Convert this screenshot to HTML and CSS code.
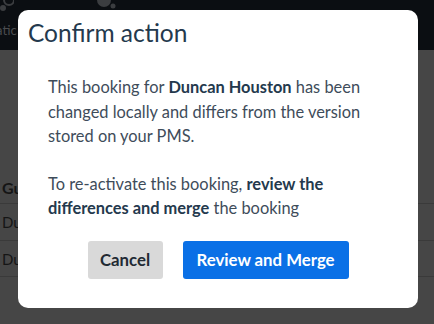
FILE: index.html
```html
<!DOCTYPE html>
<html>
<head>
<meta charset="utf-8">
<link rel="stylesheet" href="styles.css">
</head>
<body>
<div class="page">
  <header class="topbar">
    <div class="nav-item nav-first">
      <svg class="nav-icon" width="14" height="16" viewBox="0 0 14 16"><circle cx="9" cy="2" r="5" fill="none" stroke="#3b3d40" stroke-width="2"/><circle cx="3" cy="10" r="3" fill="#3b3d40"/></svg>
      <span class="nav-label">atic</span>
    </div>
    <div class="nav-item nav-second">
      <svg width="24" height="14" viewBox="0 0 24 14"><circle cx="8" cy="4" r="7" fill="#3b3d40"/><circle cx="17" cy="10" r="2.5" fill="#3b3d40"/></svg>
    </div>
  </header>
  <main class="table">
    <div class="row head-row">Gu</div>
    <div class="row">Du</div>
    <div class="row">Du</div>
  </main>
</div>

<div class="overlay">
  <div class="modal">
    <h2 class="modal-title">Confirm action</h2>
    <div class="modal-body">
      <p>This booking for <strong>Duncan Houston</strong> has been changed locally and differs from the version stored on your PMS.</p>
      <p>To re-activate this booking, <strong>review the differences and merge</strong> the booking</p>
    </div>
    <div class="modal-actions">
      <button class="btn btn-cancel">Cancel</button>
      <button class="btn btn-primary">Review and Merge</button>
    </div>
  </div>
</div>
</body>
</html>
```
FILE: styles.css
```css
* { box-sizing: border-box; }
html, body { margin: 0; padding: 0; }
body {
  width: 434px;
  height: 324px;
  overflow: hidden;
  background: #464646;
  font-family: Lato, "Noto Sans", sans-serif;
}
.topbar {
  height: 50px;
  background: #0b0e12;
  display: flex;
  align-items: flex-start;
}
.nav-item { display: flex; flex-direction: column; }
.nav-first { width: 100px; margin-left: -4px; }
.nav-icon { margin-left: 4px; margin-top: -2px; }
.nav-label {
  color: #4a4c4f;
  font-size: 13px;
  margin-top: 8px;
}
.nav-second { margin-top: -4px; }
.table { padding-top: 123px; }
.row {
  height: 37px;
  border-top: 1px solid #3a3a3a;
  color: #151515;
  font-size: 15px;
  line-height: 36px;
  padding-left: 2px;
}
.head-row {
  font-weight: 700;
  border-top: none;
  height: 30px;
  line-height: 30px;
  font-size: 16px;
}
.row:last-child { border-bottom: 1px solid #3a3a3a; }

.overlay {
  position: fixed;
  inset: 0;
  display: flex;
  justify-content: center;
  align-items: flex-start;
  padding: 10px 0 0 2px;
}
.modal {
  width: 400px;
  height: 298px;
  background: #fff;
  border-radius: 10px;
  display: flex;
  flex-direction: column;
}
.modal-title {
  margin: 0;
  padding: 7px 10px 0;
  font-size: 24.5px;
  line-height: 32px;
  font-weight: 400;
  color: #24394d;
}
.modal-body {
  padding: 26px 30px 0;
  color: #3e4c5a;
  font-size: 16.4px;
  line-height: 24.5px;
}
.modal-body p { margin: 0 0 23px; }
.modal-body p:last-child { margin: 0; }
.modal-body strong { color: #24394d; font-weight: 700; }
.modal-actions {
  display: flex;
  justify-content: center;
  gap: 20px;
  padding-top: 20px;
}
.btn {
  height: 38px;
  border: none;
  border-radius: 3px;
  font-family: Lato, "Noto Sans", sans-serif;
  font-size: 16.8px;
  font-weight: 700;
  padding: 0;
}
.btn-cancel { background: #d9d9d9; color: #222a33; width: 75px; }
.btn-primary { background: #0a70e6; color: #fff; width: 166px; }
```
